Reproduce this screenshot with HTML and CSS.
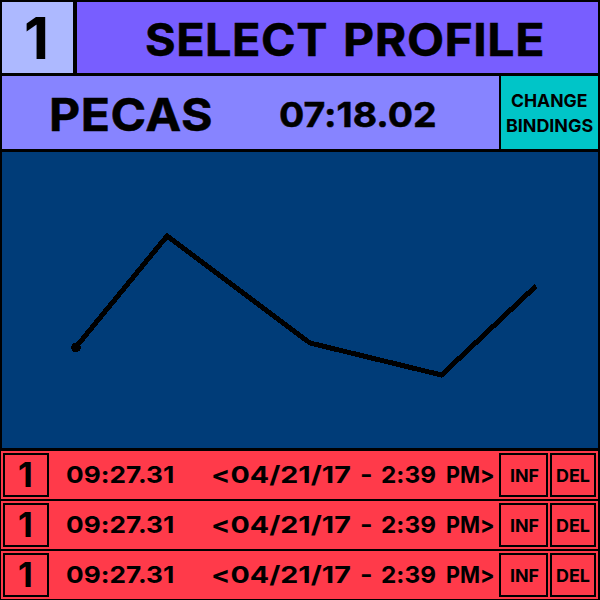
FILE: index.html
```html
<!DOCTYPE html>
<html lang="en">
<head>
<meta charset="utf-8">
<title>Select Profile</title>
<link rel="stylesheet" href="styles.css">
</head>
<body>
<main class="app">
  <header class="top">
    <div class="slot">1</div>
    <h1 class="title"><span class="select">SELECT</span><span class="profile">PROFILE</span></h1>
  </header>
  <section class="player">
    <div class="summary"><span class="name">PECAS</span><span class="best">07:18.02</span></div>
    <button class="bindings"><span class="change">CHANGE</span><span class="binds">BINDINGS</span></button>
  </section>
  <section class="chart">
    <svg width="596" height="296" viewBox="2 152 596 296">
      <polyline points="76,347 167,236 310,343 441.5,375 536,286"/>
      <circle cx="76" cy="347.5" r="4.8"/>
    </svg>
  </section>
  <section class="runs">
    <div class="run"><div class="rank">1</div><span class="time">09:27.31</span><span class="date">&lt;04/21/17</span><span class="dash">-</span><span class="clock">2:39</span><span class="half">PM&gt;</span><button class="inf">INF</button><button class="del">DEL</button></div>
    <div class="run"><div class="rank">1</div><span class="time">09:27.31</span><span class="date">&lt;04/21/17</span><span class="dash">-</span><span class="clock">2:39</span><span class="half">PM&gt;</span><button class="inf">INF</button><button class="del">DEL</button></div>
    <div class="run"><div class="rank">1</div><span class="time">09:27.31</span><span class="date">&lt;04/21/17</span><span class="dash">-</span><span class="clock">2:39</span><span class="half">PM&gt;</span><button class="inf">INF</button><button class="del">DEL</button></div>
  </section>
</main>
</body>
</html>
```
FILE: styles.css
```css
* { box-sizing: border-box; }
body { margin: 0; background: #000; color: #000; font-family: Inter, "Liberation Sans", sans-serif; font-weight: 700; font-feature-settings: "calt" 0; }
button { font: inherit; color: inherit; padding: 0; border: 0; border-radius: 0; background: none; white-space: nowrap; }
span { white-space: nowrap; transform-origin: left; }
.app { width: 600px; height: 600px; display: grid; grid-template-rows: 71px 73px 296px 148px; row-gap: 3px; padding: 2px 2px 1px; overflow: hidden; }
.top { display: grid; grid-template-columns: 71px 521px; grid-template-rows: 71px; column-gap: 4px; }
.slot { background: #adb9ff; font-size: 58px; line-height: 71px; padding: 1px 0 0 22px; }
.title { margin: 0; background: #785eff; font-size: 45px; line-height: 71px; display: flex; padding: 2px 0 0 68px; -webkit-text-stroke: .5px #000; }
.select { width: 198px; letter-spacing: .5px; transform: scaleX(1.04); }
.profile { letter-spacing: .5px; transform: scaleX(1.07); }
.player { display: grid; grid-template-columns: 497px 97px; grid-template-rows: 73px; column-gap: 2px; }
.summary { background: #8784ff; display: flex; align-items: center; padding: 3px 0 0 47px; -webkit-text-stroke: .5px #000; }
.name { width: 230px; font-size: 45px; letter-spacing: .5px; transform: scaleX(1.07); }
.best { font-size: 34.4px; transform: scaleX(1.09); }
.bindings { background: #00c5c8; font-size: 17.9px; line-height: 25px; display: flex; flex-direction: column; align-items: center; justify-content: center; }
.change { transform: scaleX(.98); }
.chart svg { display: block; background: #003c78; }
.chart polyline { fill: none; stroke: #000; stroke-width: 5; shape-rendering: crispEdges; }
.chart circle { shape-rendering: crispEdges; }
.runs { display: grid; grid-template-rows: repeat(3, 48px); row-gap: 2px; margin-left: -1px; }
.run { background: #ff3a4a; padding: 2px; display: grid; grid-template-columns: 63px 145px 149px 21px 65px 53px 51px 46px; align-items: center; font-size: 23.4px; }
.run span { padding-bottom: 2px; }
.time { transform: scaleX(1.12); }
.date { transform: scaleX(1.225); }
.dash { transform: scaleX(1.15); }
.clock { transform: scaleX(1.04); }
.half { transform: scaleX(.92); }
.rank { border: 2px solid; width: 46px; height: 44px; font-size: 34.4px; line-height: 40px; padding-left: 13px; }
.inf, .del { border: 2px solid; height: 44px; font-size: 17.9px; }
.inf { width: 49px; padding-left: 2px; }
```
